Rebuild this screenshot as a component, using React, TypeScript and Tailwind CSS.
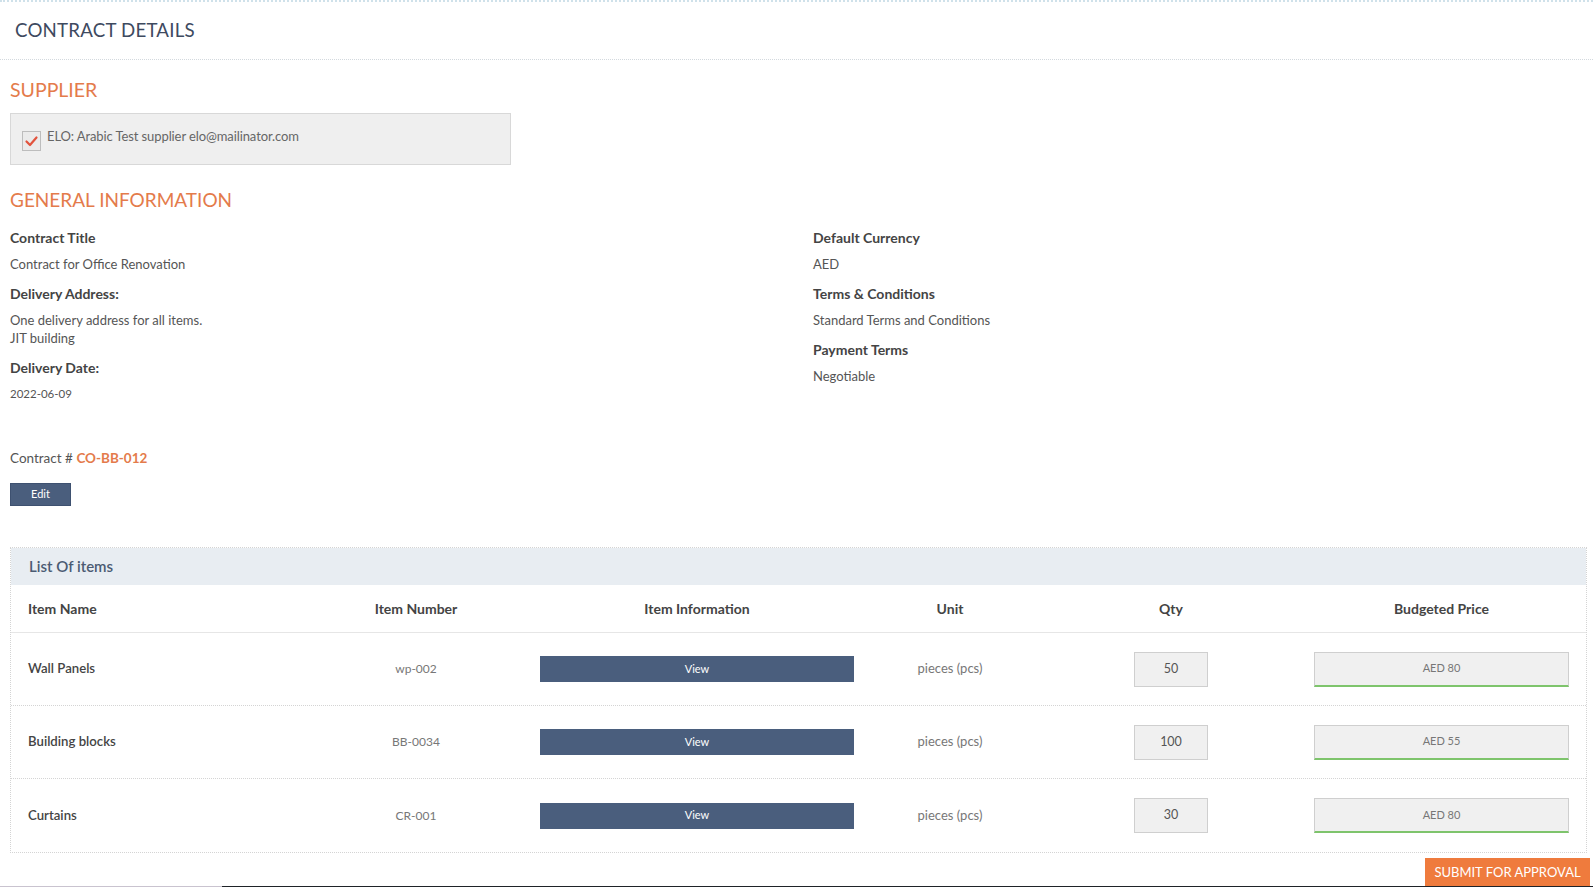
import React from 'react';

const items = [
  { name: 'Wall Panels', number: 'wp-002', unit: 'pieces (pcs)', qty: '50', price: 'AED 80' },
  { name: 'Building blocks', number: 'BB-0034', unit: 'pieces (pcs)', qty: '100', price: 'AED 55' },
  { name: 'Curtains', number: 'CR-001', unit: 'pieces (pcs)', qty: '30', price: 'AED 80' },
];

const cols = 'grid grid-cols-[299px_212px_350px_156px_286px_255px]';

function Field({ label, children }: { label: string; children: React.ReactNode }) {
  return (
    <div className="mb-[12px]">
      <div className="text-[14px] leading-[18px] font-bold text-[#444]">{label}</div>
      <div className="mt-[8px] text-[13px] leading-[18px] text-[#555]">{children}</div>
    </div>
  );
}

function CheckIcon() {
  return (
    <svg width="19" height="20" viewBox="0 0 19 20" className="shrink-0">
      <rect x="0.5" y="0.5" width="18" height="19" fill="#ebebeb" stroke="#bdbdbd" />
      <path d="M4.5 10.5 L8 14 L14.5 6.5" fill="none" stroke="#e2533d" strokeWidth="2.2" strokeLinecap="round" strokeLinejoin="round" />
    </svg>
  );
}

export default function App() {
  return (
    <div className="w-[1593px] h-[887px] overflow-hidden bg-white flex flex-col font-['Lato','Open_Sans',sans-serif]">
      <div className="h-[60px] shrink-0 flex items-center px-[15px] border-t-2 border-b border-dotted border-t-[#cfe1ea] border-b-[#d3d9de]">
        <h1 className="text-[18.7px] tracking-[0.2px] text-[#3e4a5f]">CONTRACT DETAILS</h1>
      </div>

      <div className="pl-[10px] pr-[6px] flex flex-col">
        <h2 className="mt-[18px] h-[24px] leading-[24px] text-[19.5px] text-[#e47b4b]">SUPPLIER</h2>

        <div className="mt-[11px] w-[501px] h-[52px] bg-[#efefef] border border-[#d8d8d8] flex items-start pl-[11px] pt-[17px] gap-[6px]">
          <CheckIcon />
          <span className="-mt-[4px] text-[13px] leading-[18px] text-[#666] tracking-[-0.1px]">
            ELO: Arabic Test supplier elo@mailinator.com
          </span>
        </div>

        <h2 className="mt-[23px] h-[24px] leading-[24px] text-[19px] text-[#e47b4b]">GENERAL INFORMATION</h2>

        <div className="mt-[17px] grid grid-cols-[803px_1fr]">
          <div>
            <Field label="Contract Title">Contract for Office Renovation</Field>
            <Field label="Delivery Address:">
              One delivery address for all items.
              <br />
              JIT building
            </Field>
            <div>
              <div className="text-[14px] leading-[18px] font-bold text-[#444]">Delivery Date:</div>
              <div className="mt-[8px] text-[11.5px] leading-[18px] text-[#555]">2022-06-09</div>
            </div>
          </div>
          <div>
            <Field label="Default Currency">AED</Field>
            <Field label="Terms &amp; Conditions">Standard Terms and Conditions</Field>
            <Field label="Payment Terms">Negotiable</Field>
          </div>
        </div>

        <div className="mt-[46px] text-[13.5px] leading-[18px] text-[#555]">
          Contract # <span className="font-bold text-[#e47b4b]">CO-BB-012</span>
        </div>

        <button className="mt-[16px] w-[61px] h-[23px] bg-[#4a5e7d] text-white text-[11px] border border-[#3e5170]">
          Edit
        </button>

        <div className="mt-[41px] border border-dotted border-[#d4d4d4]">
          <div className="h-[37px] bg-[#e8edf2] flex items-center pl-[18px] text-[15px] font-semibold text-[#4b5b72]">
            List Of items
          </div>
          <div className={`${cols} h-[48px] items-center border-b border-[#e6e6e6] text-[14px] font-bold text-[#444]`}>
            <div className="pl-[17px]">Item Name</div>
            <div className="text-center">Item Number</div>
            <div className="text-center">Item Information</div>
            <div className="text-center">Unit</div>
            <div className="text-center">Qty</div>
            <div className="text-center">Budgeted Price</div>
          </div>
          {items.map((it, i) => (
            <div
              key={it.number}
              className={`${cols} h-[73px] items-center ${i < items.length - 1 ? 'border-b border-dotted border-[#d4d4d4]' : ''}`}
            >
              <div className="pl-[17px] text-[13.2px] font-semibold text-[#444]">{it.name}</div>
              <div className="text-center text-[12px] text-[#777]">{it.number}</div>
              <div className="flex justify-center">
                <button className="w-[314px] h-[26px] bg-[#4a5e7d] text-white text-[11px]">View</button>
              </div>
              <div className="text-center text-[13px] text-[#777]">{it.unit}</div>
              <div className="flex justify-center">
                <div className="w-[74px] h-[35px] bg-[#f0f0f0] border border-[#cfcfcf] flex items-center justify-center text-[12.5px] text-[#555]">
                  {it.qty}
                </div>
              </div>
              <div className="flex justify-center">
                <div className="w-[255px] h-[35px] bg-[#f0f0f0] border border-[#cfcfcf] border-b-2 border-b-[#7ec46c] flex items-center justify-center text-[11px] text-[#777]">
                  {it.price}
                </div>
              </div>
            </div>
          ))}
        </div>

        <div className="mt-[5px] flex justify-end -mr-[3px]">
          <button className="w-[165px] h-[28px] bg-[#ef7b3d] text-white text-[13px] pt-[2px]">SUBMIT FOR APPROVAL</button>
        </div>
      </div>

      <div className="mt-auto h-[1px] shrink-0 flex">
        <div className="w-[222px] bg-[#c9c3cf]" />
        <div className="flex-1 bg-[#1f2328]" />
      </div>
    </div>
  );
}
